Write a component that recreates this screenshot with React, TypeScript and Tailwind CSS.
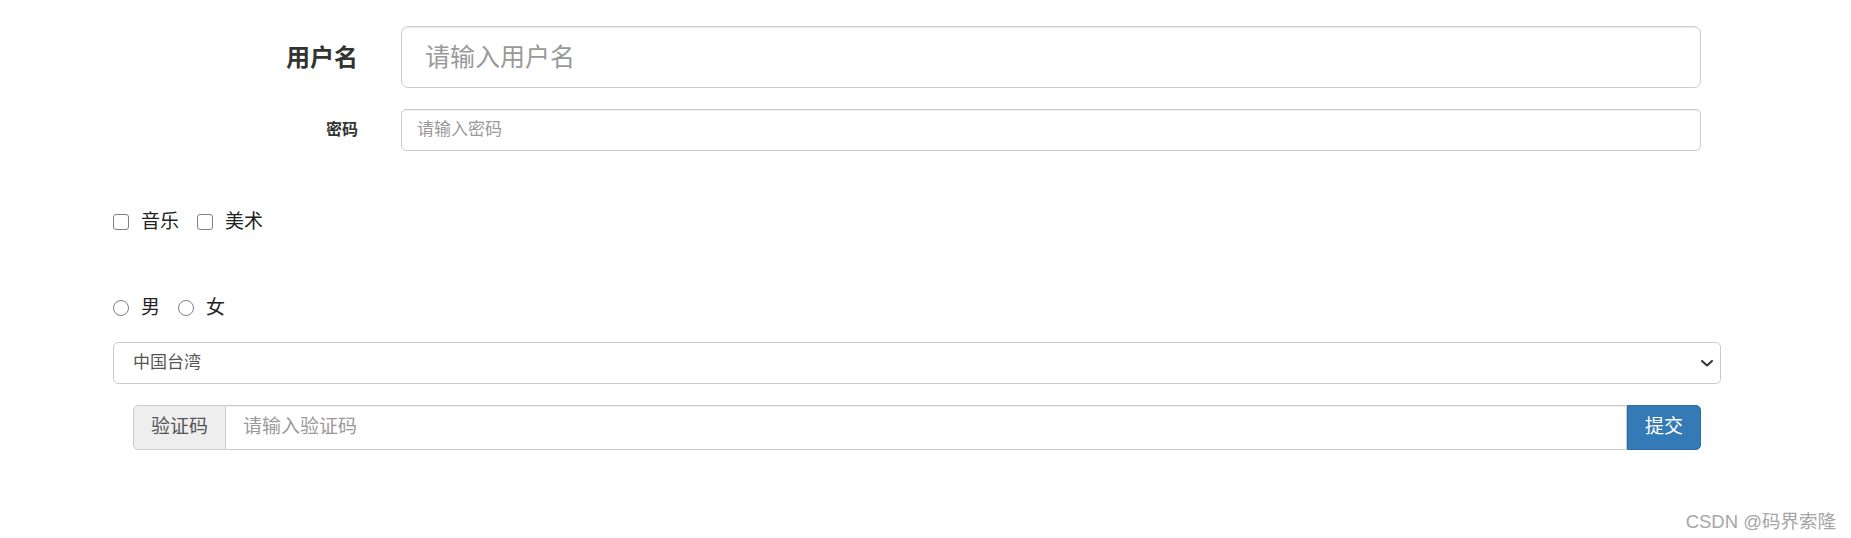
import React from 'react';

// Bootstrap-ish form, scaled up (looks like ~120% browser zoom)
const font = { fontFamily: '"Liberation Sans", "Noto Sans CJK SC", sans-serif' };

function Check({ label, type }: { label: string; type: 'checkbox' | 'radio' }) {
  return (
    <label className="flex items-center gap-[12px] cursor-pointer">
      <input
        type={type}
        name={type === 'radio' ? 'sex' : undefined}
        className={`appearance-none w-4 h-4 border-[1.5px] border-[#808080] bg-white ${type === 'radio' ? 'rounded-full' : 'rounded-[3px]'}`}
      />
      <span className="text-[19px] leading-[24px] text-[#222]">{label}</span>
    </label>
  );
}

export default function App() {
  return (
    <div className="min-h-screen bg-white text-[#333]" style={font}>
      <div className="pl-[113px] w-[1721px] pt-[26px]">
        {/* username */}
        <div className="ml-[20px] w-[1568px] flex items-center gap-[43px]">
          <label className="w-[225px] text-right text-[24px] font-bold leading-none pt-[2px]">用户名</label>
          <input
            type="text"
            placeholder="请输入用户名"
            className="flex-1 h-[62px] px-[23px] text-[25px] border border-[#ccc] rounded-[7px] shadow-[inset_0_1px_1px_rgba(0,0,0,0.075)] outline-none placeholder:text-[#999]"
          />
        </div>

        {/* password */}
        <div className="ml-[20px] w-[1568px] mt-[21px] flex items-center gap-[43px]">
          <label className="w-[225px] text-right text-[16px] font-bold leading-none">密码</label>
          <input
            type="password"
            placeholder="请输入密码"
            className="flex-1 h-[42px] px-[15px] text-[17px] border border-[#ccc] rounded-[5px] shadow-[inset_0_1px_1px_rgba(0,0,0,0.075)] outline-none placeholder:text-[#999]"
          />
        </div>

        {/* hobbies */}
        <div className="mt-[59px] h-[24px] flex items-center gap-[18px]">
          <Check type="checkbox" label="音乐" />
          <Check type="checkbox" label="美术" />
        </div>

        {/* sex */}
        <div className="mt-[62px] h-[24px] flex items-center gap-[18px]">
          <Check type="radio" label="男" />
          <Check type="radio" label="女" />
        </div>

        {/* region */}
        <div className="relative mt-[22px] w-[1608px]">
          <select
            defaultValue="tw"
            className="appearance-none w-full h-[42px] pl-[19px] pr-10 text-[17px] text-[#555] bg-white border border-[#ccc] rounded-[5px] outline-none"
          >
            <option value="tw">中国台湾</option>
            <option value="hk">中国香港</option>
            <option value="mo">中国澳门</option>
          </select>
          <svg className="absolute right-[8px] top-[18px] w-[12px] h-[7px] pointer-events-none" viewBox="0 0 12 7" fill="none">
            <path d="M1 1l5 4.5L11 1" stroke="#333" strokeWidth="2" strokeLinecap="round" strokeLinejoin="round" />
          </svg>
        </div>

        {/* captcha */}
        <div className="ml-[20px] w-[1568px] mt-[21px] flex h-[45px]">
          <span className="flex items-center px-[17px] text-[19px] text-[#555] bg-[#eee] border border-[#ccc] rounded-l-[5px]">
            验证码
          </span>
          <input
            type="text"
            placeholder="请输入验证码"
            className="flex-1 px-[17px] text-[19px] border border-l-0 border-[#ccc] shadow-[inset_0_1px_1px_rgba(0,0,0,0.075)] outline-none placeholder:text-[#999]"
          />
          <button className="px-[17px] text-[19px] text-white bg-[#337ab7] border border-[#2e6da4] rounded-r-[5px]">
            提交
          </button>
        </div>
      </div>

      <div className="flex justify-end pr-[15px] mt-[60px]">
        <span className="text-[18.5px] leading-[24px] text-[#a6a6a6]">CSDN @码界索隆</span>
      </div>
    </div>
  );
}
